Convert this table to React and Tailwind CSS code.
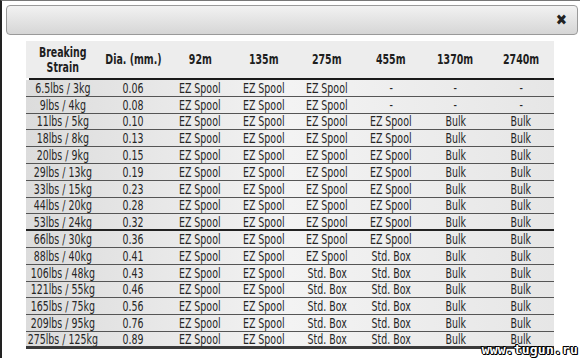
const EZ = 'EZ Spool';
const SB = 'Std. Box';

const heads = ['92m', '135m', '275m', '455m', '1370m', '2740m'];

const rows = [
    ['6.5lbs / 3kg', '0.06', EZ, EZ, EZ, '-', '-', '-'],
    ['9lbs / 4kg', '0.08', EZ, EZ, EZ, '-', '-', '-'],
    ['11lbs / 5kg', '0.10', EZ, EZ, EZ, EZ, 'Bulk', 'Bulk'],
    ['18lbs / 8kg', '0.13', EZ, EZ, EZ, EZ, 'Bulk', 'Bulk'],
    ['20lbs / 9kg', '0.15', EZ, EZ, EZ, EZ, 'Bulk', 'Bulk'],
    ['29lbs / 13kg', '0.19', EZ, EZ, EZ, EZ, 'Bulk', 'Bulk'],
    ['33lbs / 15kg', '0.23', EZ, EZ, EZ, EZ, 'Bulk', 'Bulk'],
    ['44lbs / 20kg', '0.28', EZ, EZ, EZ, EZ, 'Bulk', 'Bulk'],
    ['53lbs / 24kg', '0.32', EZ, EZ, EZ, EZ, 'Bulk', 'Bulk'],
    ['66lbs / 30kg', '0.36', EZ, EZ, EZ, EZ, 'Bulk', 'Bulk'],
    ['88lbs / 40kg', '0.41', EZ, EZ, EZ, SB, 'Bulk', 'Bulk'],
    ['106lbs / 48kg', '0.43', EZ, EZ, SB, SB, 'Bulk', 'Bulk'],
    ['121lbs / 55kg', '0.46', EZ, EZ, SB, SB, 'Bulk', 'Bulk'],
    ['165lbs / 75kg', '0.56', EZ, EZ, SB, SB, 'Bulk', 'Bulk'],
    ['209lbs / 95kg', '0.76', EZ, EZ, SB, SB, 'Bulk', 'Bulk'],
    ['275lbs / 125kg', '0.89', EZ, EZ, SB, SB, 'Bulk', 'Bulk'],
];

const cols = 'grid grid-cols-[73px_68px_66px_62px_64px_64px_65px_66px]';

// condensed look: the reference face is narrower than anything installed
function Cell({ children }) {
    return (
        <div className="flex justify-center whitespace-nowrap">
            <span className="inline-block scale-x-[0.75]">{children}</span>
        </div>
    );
}

export default function App() {
    return (
        <div className="relative w-[580px] h-[358px] bg-white overflow-hidden border-l-2 border-t border-l-[#222] border-t-[#777] font-['DejaVu_Sans_Condensed',sans-serif] text-[#262626]">
            {/* Title bar */}
            <div className="ml-[4px] mr-[2px] mt-[4px] h-[30px] rounded-[4px] border border-[#9a9a9a] bg-gradient-to-b from-[#f2f2f2] to-[#d6d6d6] flex items-center justify-end pr-[10px]">
                <span className="text-[15px] font-bold leading-none text-[#222]">✖</span>
            </div>

            {/* Table */}
            <div className="ml-[24px] mt-[6px] w-[528px]">
                <div className={`${cols} h-[37px] bg-[#ededed] items-center font-bold text-[14px] leading-[15px] text-[#1e1e1e] text-center`}>
                    <Cell>
                        <span className="flex flex-col items-center">
                            <span>Breaking</span>
                            <span>Strain</span>
                        </span>
                    </Cell>
                    <Cell>Dia. (mm.)</Cell>
                    {heads.map((h) => (
                        <Cell key={h}>{h}</Cell>
                    ))}
                </div>
                <div className="h-[2px] ml-[3px] bg-[#1a1a1a]" />
                {rows.map((r, i) => (
                    <div
                        key={r[0]}
                        className={`${cols} h-[16.8px] items-center text-[14px] leading-none bg-gradient-to-r from-[#dcdcdc] via-[#f3f3f3] to-[#e6e6e6] ${
                            i === 8 ? 'border-b-2 border-[#222]' : i === 15 ? 'border-b-[3px] border-[#3a3a3a]' : 'border-b border-[#555]'
                        }`}
                    >
                        {r.map((c, j) => (
                            <Cell key={j}>{c}</Cell>
                        ))}
                    </div>
                ))}
            </div>

            {/* Watermark */}
            <div className="absolute right-[2px] bottom-[2px] font-['DejaVu_Sans_Mono',monospace] font-bold text-[13px] leading-none tracking-[0.2px] text-white [text-shadow:1px_0_#000,-1px_0_#000,0_1px_#000,0_-1px_#000,1px_1px_#000,-1px_-1px_#000]">
                www.tugun.ru
            </div>
        </div>
    );
}
